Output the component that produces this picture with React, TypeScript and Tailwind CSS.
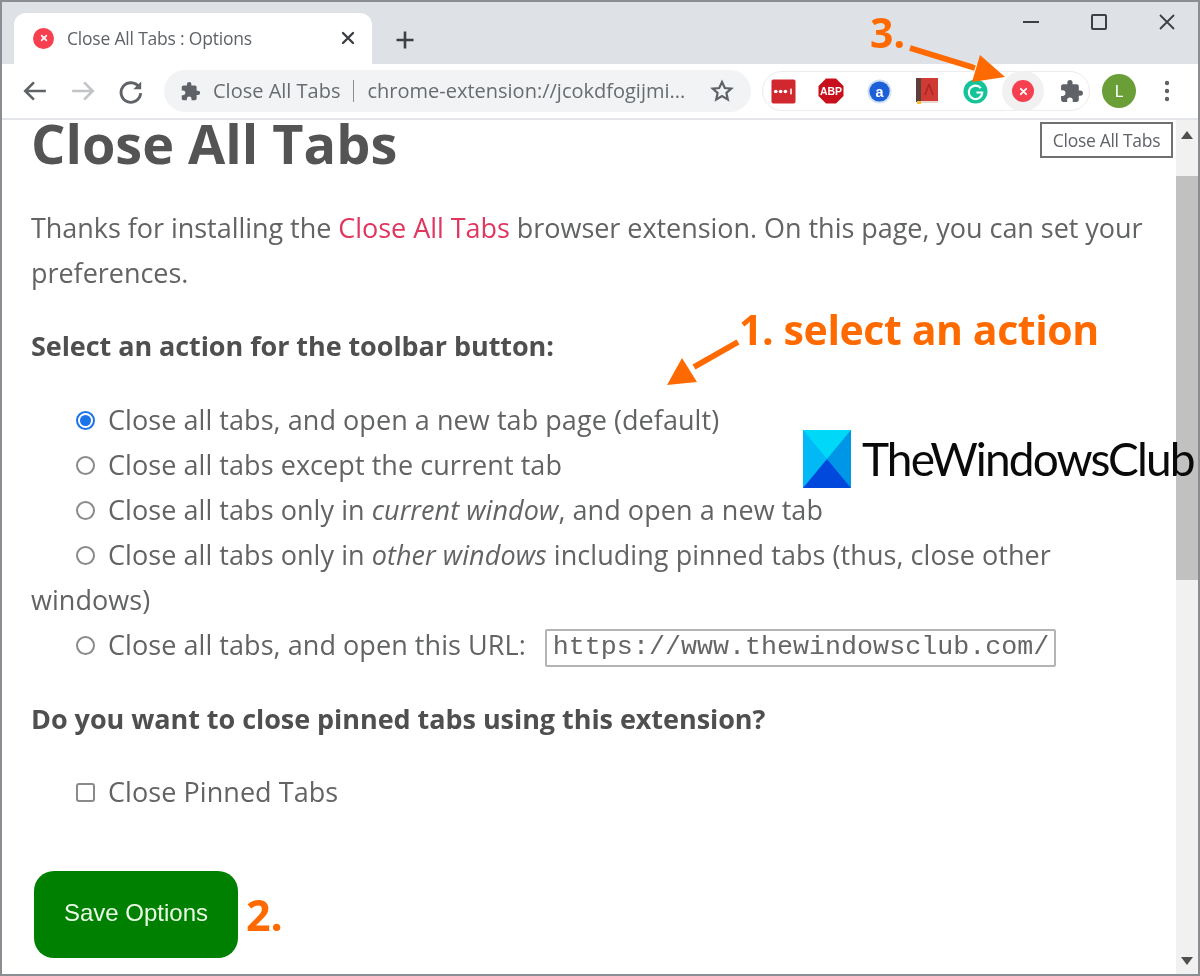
import React from "react";

const sans = "font-['Noto_Sans','Open_Sans',sans-serif]";

function Puzzle({ className, fill }: { className?: string; fill: string }) {
  return (
    <svg viewBox="0 0 24 24" className={className} fill={fill}>
      <path d="M20.5 11H19V7c0-1.1-.9-2-2-2h-4V3.5a2.5 2.5 0 0 0-5 0V5H4c-1.1 0-2 .9-2 2v3.8h1.5a2.7 2.7 0 0 1 0 5.4H2V20c0 1.1.9 2 2 2h3.8v-1.5a2.7 2.7 0 0 1 5.4 0V22H17c1.1 0 2-.9 2-2v-4h1.5a2.5 2.5 0 0 0 0-5z" />
    </svg>
  );
}

function RedX({ size, x }: { size: string; x: string }) {
  return (
    <span className={`${size} rounded-full bg-[#f6404f] flex items-center justify-center`}>
      <svg viewBox="0 0 10 10" className={x} stroke="#ffffff" strokeWidth="2" strokeLinecap="round">
        <path d="M2 2l6 6M8 2l-6 6" />
      </svg>
    </span>
  );
}

function Radio({ checked }: { checked?: boolean }) {
  return checked ? (
    <span className="w-[19px] h-[19px] rounded-full border-2 border-[#1a73e8] flex items-center justify-center shrink-0">
      <span className="w-[11px] h-[11px] rounded-full bg-[#1a73e8]" />
    </span>
  ) : (
    <span className="w-[19px] h-[19px] rounded-full border-2 border-[#8a8a8a] bg-white shrink-0" />
  );
}

function Option({ checked, children }: { checked?: boolean; children: React.ReactNode }) {
  return (
    <div className="h-[45px] flex items-center pl-[45px] gap-[13px] whitespace-nowrap">
      <Radio checked={checked} />
      <span>{children}</span>
    </div>
  );
}

function ExtIcons() {
  return (
    <div className="w-[328px] h-[40px] rounded-full border border-[#ececee] flex items-center shrink-0">
      <span className="w-[48px] shrink-0 -ml-[4px] flex justify-center">
        <svg viewBox="0 0 26 26" className="w-[25px] h-[25px]">
          <rect width="25" height="25" x="0.5" y="0.5" rx="2" fill="#d0282e" />
          <circle cx="5" cy="13" r="1.900" fill="#fff" />
          <circle cx="10" cy="13" r="1.900" fill="#fff" />
          <circle cx="15" cy="13" r="1.900" fill="#fff" />
          <rect x="20" y="10" width="1.600" height="6" fill="#fff" />
        </svg>
      </span>
      <span className="w-[48px] shrink-0 flex justify-center">
        <svg viewBox="0 0 26 26" className="w-[26px] h-[26px]">
          <path d="M8 .5h10L25.500 8v10L18 25.500H8L.5 18V8z" fill="#c8101c" />
          <text x="13" y="17" textAnchor="middle" fontSize="10.500" fontWeight="700" fill="#fff" fontFamily="Liberation Sans">ABP</text>
        </svg>
      </span>
      <span className="w-[48px] shrink-0 flex justify-center">
        <svg viewBox="0 0 26 26" className="w-[25px] h-[25px]">
          <circle cx="13" cy="13" r="12.500" fill="#cfe0f6" />
          <circle cx="13" cy="13" r="10.500" fill="#1c5fd6" />
          <text x="13" y="18.500" textAnchor="middle" fontSize="15" fontWeight="700" fill="#fff" fontFamily="Liberation Sans">a</text>
        </svg>
      </span>
      <span className="w-[48px] shrink-0 flex justify-center">
        <svg viewBox="0 0 22 26" className="w-[22px] h-[26px]">
          <rect width="22" height="24" fill="#cf3a35" />
          <rect width="5" height="24" fill="#5a4038" />
          <rect x="5" y="23" width="17" height="2" fill="#e9d9d0" />
          <rect x="1" y="23" width="4" height="3" fill="#f2c230" />
          <path d="M13 6l4 11M13 6l-4 11" stroke="#a92622" strokeWidth="1.500" />
        </svg>
      </span>
      <span className="w-[48px] shrink-0 flex justify-center">
        <svg viewBox="0 0 26 26" className="w-[25px] h-[25px]">
          <circle cx="13" cy="13" r="12.500" fill="#15c39a" />
          <path d="M18.500 9.500A7 7 0 1 0 20 14h-6" fill="none" stroke="#fff" strokeWidth="2.200" />
        </svg>
      </span>
      <span className="w-[48px] shrink-0 flex justify-center">
        <span className="w-[42px] h-[40px] rounded-full bg-[#f1f1f2] flex items-center justify-center">
          <RedX size="w-[22px] h-[22px]" x="w-[9px] h-[9px]" />
        </span>
      </span>
      <span className="w-[48px] shrink-0 flex justify-center">
        <Puzzle className="w-[25px] h-[25px]" fill="#5f6368" />
      </span>
    </div>
  );
}

export default function App() {
  return (
    <div className={`${sans} relative w-[1200px] h-[976px] overflow-hidden bg-white border-2 border-[#8a8d91] flex flex-col blur-[0.7px]`}>
      {/* Tab strip */}
      <div className="h-[62px] bg-[#dee1e6] flex items-end pl-[12px] shrink-0 relative">
        <div className="w-[358px] h-[51px] pb-[1px] bg-white rounded-t-[12px] flex items-center pl-[19px] pr-[16px]">
          <RedX size="w-[21px] h-[21px]" x="w-[8px] h-[8px]" />
          <span className="ml-[13px] text-[17.500px] text-[#5f6368] flex-1 font-['Open_Sans',sans-serif] tracking-[-0.2px]">Close All Tabs : Options</span>
          <svg viewBox="0 0 16 16" className="w-[16px] h-[16px]" stroke="#3c4043" strokeWidth="2.400" strokeLinecap="round">
            <path d="M3 3l10 10M13 3L3 13" />
          </svg>
        </div>
        <svg viewBox="0 0 20 20" className="w-[20px] h-[20px] ml-[23px] mb-[14px]" stroke="#3c4043" strokeWidth="2.600">
          <path d="M10 1.500v17M1.500 10h17" />
        </svg>
        <div className="absolute right-[23px] top-[12px] flex items-center gap-[52px]">
          <span className="w-[16px] h-[2.500px] bg-[#3c4043]" />
          <span className="w-[16px] h-[16px] border-2 border-[#3c4043] rounded-[2px]" />
          <svg viewBox="0 0 16 16" className="w-[16px] h-[16px]" stroke="#3c4043" strokeWidth="1.800">
            <path d="M1 1l14 14M15 1L1 15" />
          </svg>
        </div>
      </div>

      {/* Toolbar */}
      <div className="h-[56px] bg-white border-b-2 border-[#e3e5e8] flex items-center shrink-0 pl-[20px]">
        <svg viewBox="0 0 24 24" className="w-[26px] h-[26px]" fill="none" stroke="#5f6368" strokeWidth="2.400">
          <path d="M22 12H3M11 4l-8 8 8 8" />
        </svg>
        <svg viewBox="0 0 24 24" className="w-[26px] h-[26px] ml-[22px]" fill="none" stroke="#c1c4c8" strokeWidth="2.400">
          <path d="M2 12h19M13 4l8 8-8 8" />
        </svg>
        <svg viewBox="0 0 24 24" className="w-[27px] h-[27px] ml-[21px]" fill="none" stroke="#5f6368" strokeWidth="2.600">
          <path d="M19.500 8A8.700 8.700 0 1 0 21 13.500" />
          <path d="M21.500 3v7h-7z" fill="#5f6368" stroke="none" />
        </svg>
        <div className="ml-[20px] w-[587px] h-[42px] rounded-full bg-[#f1f3f4] flex items-center pl-[16px] shrink-0 whitespace-nowrap text-[20px] text-[#686c70] font-['Open_Sans',sans-serif]">
          <Puzzle className="w-[21px] h-[21px]" fill="#5f6368" />
          <span className="ml-[12px]">Close All Tabs</span>
          <span className="w-[1px] h-[22px] bg-[#8d9093] ml-[13px] mr-[13px]" />
          <span className="w-[330px] overflow-hidden">chrome-extension://jcokdfogijmi...</span>
          <svg viewBox="0 0 24 24" className="w-[24px] h-[24px] ml-[13px]" fill="none" stroke="#5f6368" strokeWidth="2.200">
            <path d="M12 3l2.800 6 6.500.7-4.900 4.300 1.400 6.500L12 17.100 6.200 20.500l1.400-6.500-4.900-4.300 6.500-.7z" />
          </svg>
        </div>
        <div className="ml-[11px]"><ExtIcons /></div>
        <span className="ml-[12px] w-[34px] h-[34px] rounded-full bg-[#6a9e37] text-white text-[17px] flex items-center justify-center">L</span>
        <svg viewBox="0 0 6 24" className="w-[6px] h-[24px] ml-[28px]" fill="#5f6368">
          <circle cx="3" cy="4" r="2.200" /><circle cx="3" cy="12" r="2.200" /><circle cx="3" cy="20" r="2.200" />
        </svg>
      </div>

      {/* Page */}
      <div className="flex flex-1 min-h-0">
        <div className="flex-1 min-w-0 pl-[29px] text-[27px] text-[#626364] font-['Open_Sans',sans-serif] tracking-[0.06px]">
          <h1 className="text-[54px] font-bold leading-[46px] text-[#545454] tracking-[0px] whitespace-nowrap">Close All Tabs</h1>
          <p className="mt-[39px] leading-[45px] w-[1130px] tracking-[-0.04px]">
            Thanks for installing the <span className="text-[#e0365f]">Close All Tabs</span> browser extension. On this page, you can set your preferences.
          </p>
          <p className="mt-[28px] font-bold text-[#4f4f4f] leading-[45px] tracking-[-0.07px]">Select an action for the toolbar button:</p>
          <div className="mt-[30px]">
            <Option checked>Close all tabs, and open a new tab page (default)</Option>
            <Option>Close all tabs except the current tab</Option>
            <Option>Close all tabs only in <em>current window</em>, and open a new tab</Option>
            <Option>Close all tabs only in <em>other windows</em> including pinned tabs (thus, close other</Option>
            <div className="h-[45px] leading-[44px]">windows)</div>
            <div className="h-[45px] flex items-center pl-[45px] gap-[13px] whitespace-nowrap">
              <Radio />
              <span>Close all tabs, and open this URL:</span>
              <div className="ml-[6px] mt-[4px] w-[511px] h-[38px] border-2 border-[#b4b4b4] rounded-[2px] bg-white flex items-center pl-[6px] overflow-hidden font-['Liberation_Mono',monospace] text-[26.700px] tracking-[0px] text-[#666666]">https://www.thewindowsclub.com/</div>
            </div>
          </div>
          <p className="mt-[28px] font-bold text-[#4f4f4f] leading-[45px] tracking-[-0.05px]">Do you want to close pinned tabs using this extension?</p>
          <div className="mt-[29px] h-[45px] flex items-center pl-[45px] gap-[13px]">
            <span className="w-[19px] h-[19px] border-2 border-[#8a8a8a] rounded-[3px] bg-white shrink-0" />
            <span>Close Pinned Tabs</span>
          </div>
          <div className="mt-[56px] flex items-center ml-[3px]">
            <div className="w-[204px] h-[87px] pb-[3px] rounded-[20px] bg-[#008000] text-[#eafbe6] text-[24px] font-['Liberation_Sans',sans-serif] tracking-[0px] flex items-center justify-center">Save Options</div>
            <span className="ml-[8px] text-[43px] leading-[60px] font-bold text-[#ff6a00] tracking-[0px]">2.</span>
          </div>
        </div>
        {/* Scrollbar */}
        <div className="w-[22px] bg-[#f1f1f1] shrink-0 flex flex-col items-center">
          <svg viewBox="0 0 12 8" className="w-[12px] h-[8px] mt-[11px]" fill="#505050"><path d="M6 0l6 8H0z" /></svg>
          <div className="w-full h-[404px] bg-[#c1c1c1] mt-[37px]" />
          <svg viewBox="0 0 12 8" className="w-[12px] h-[8px] mt-auto mb-[9px]" fill="#505050"><path d="M0 0h12L6 8z" /></svg>
        </div>
      </div>

      {/* Tooltip */}
      <div className="absolute left-[1038px] top-[120px] w-[133px] h-[36px] bg-white border-2 border-[#707070] flex items-center justify-center text-[17.500px] text-[#5f6368] font-['Open_Sans',sans-serif] tracking-[-0.3px]">Close All Tabs</div>

      {/* Annotations */}
      <span className="absolute left-[868px] top-[5px] text-[41px] leading-[50px] font-bold text-[#ff6a00]">3.</span>
      <span className="absolute left-[737px] top-[299px] text-[41px] leading-[56px] font-bold text-[#ff6a00] font-['Open_Sans',sans-serif] tracking-[-0.4px] whitespace-nowrap">1. select an action</span>
      <svg viewBox="0 0 1200 976" className="absolute left-[-2px] top-[-2px] w-[1200px] h-[976px] pointer-events-none">
        <path d="M910 48l65 20" stroke="#ff6a00" strokeWidth="6" />
        <path d="M980 55l25 22-33 5z" fill="#ff6a00" />
        <path d="M738 342l-44 25" stroke="#ff6a00" strokeWidth="6" />
        <path d="M682 358l15 24-30 3z" fill="#ff6a00" />
      </svg>

      {/* Logo */}
      <div className="absolute left-[801px] top-[428px] flex items-center">
        <svg viewBox="0 0 48 58" className="w-[48px] h-[58px]">
          <rect width="48" height="58" fill="#02b8f5" />
          <path d="M0 0h48L24 29z" fill="#00d8f7" />
          <path d="M48 0v58L24 29z" fill="#0096e8" />
          <path d="M0 58h48L24 29z" fill="#0049dc" />
        </svg>
        <span className="ml-[11px] text-[46px] leading-[58px] text-[#0a0a0a] tracking-[-1.9px] whitespace-nowrap font-['Lato',sans-serif]">TheWindowsClub</span>
      </div>
    </div>
  );
}
